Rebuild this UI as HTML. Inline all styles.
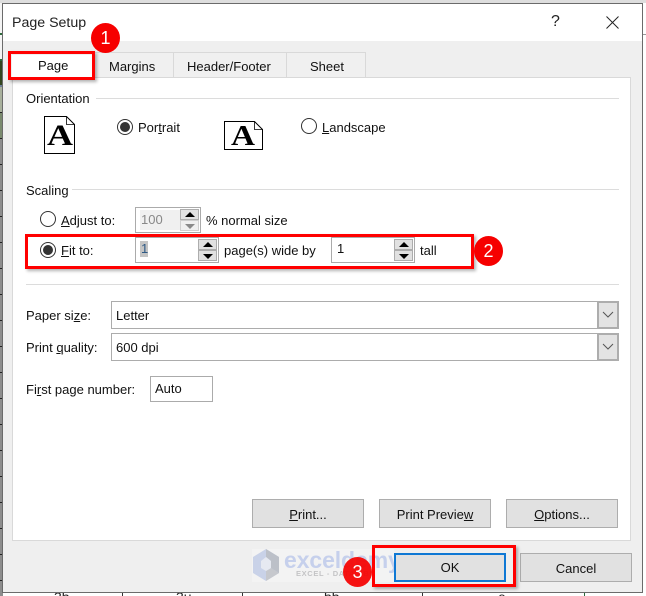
<!DOCTYPE html>
<html><head><meta charset="utf-8">
<style>
html{margin:0;padding:0;width:646px;height:596px;overflow:hidden}
body{margin:0;padding:0;width:646px;height:596px;position:relative;overflow:hidden;background:#fff;font-family:"Liberation Sans",sans-serif;font-size:13px;color:#111}
.a{position:absolute}
.t{position:absolute;white-space:nowrap;line-height:16px}
.box{position:absolute;box-sizing:border-box;border:1px solid #ababab;background:#fff}
.line{position:absolute;height:1px;background:#dcdcdc}
.btn{position:absolute;box-sizing:border-box;border:1px solid #adadad;background:#e1e1e1;text-align:center;line-height:29px;height:29px}
.red{position:absolute;box-sizing:border-box;border:3px solid #f00;box-shadow:2px 2px 3px rgba(0,0,0,.3)}
.num{position:absolute;width:29px;height:30px;border-radius:50%;background:#f60000;color:#fff;text-align:center;line-height:30px;font-size:18px}
.sp{position:absolute;box-sizing:border-box;width:19px;height:11px;border:1px solid #adadad;background:#e1e1e1}
.up:after,.dn:after{content:"";position:absolute;left:4px;border-left:5px solid transparent;border-right:5px solid transparent}
.up:after{top:2px;border-bottom:5px solid #000}
.dn:after{top:3px;border-top:5px solid #000}
.dis{background:#f0f0f0;border-color:#d0d0d0}
.dis:after{border-top-color:#8a8a8a}
.radio{position:absolute;box-sizing:border-box;width:16px;height:16px;border-radius:50%;border:1px solid #333;background:#fff}
.radio.on:after{content:"";position:absolute;left:2px;top:2px;width:10px;height:10px;border-radius:50%;background:#333}
.arr{position:absolute;box-sizing:border-box;left:597px;width:22px;height:28px;border:2px solid #adadad;background:#e3e3e3}
u{text-decoration-thickness:1px;text-underline-offset:1px}
.tick{position:absolute;left:0;width:3px;height:1px;background:#222}
.sheet{position:absolute;white-space:nowrap;font-size:14px;line-height:16px;color:#222;top:-4px}
</style></head>
<body>
<div class="a" style="left:0;top:0;width:646px;height:3px;background:#dedede"></div>
<div class="a" style="left:0;top:86px;width:3px;height:510px;background:#8d8d8d"></div>
<div class="a" style="left:0;top:3px;width:3px;height:57px;background:#f4f4f4"></div>
<div class="a" style="left:0;top:33px;width:3px;height:2px;background:#2d6a3c"></div>
<div class="a" style="left:0;top:59px;width:3px;height:2px;background:#2d6a3c"></div>
<div class="a" style="left:0;top:61px;width:3px;height:24px;background:#33461f"></div>
<div class="a" style="left:0;top:85px;width:3px;height:2px;background:#6f7f9a"></div>
<div class="a" style="left:0;top:113px;width:3px;height:25px;background:#7a8a6e"></div>
<div class="a" style="left:0;top:87px;width:3px;height:26px;background:#a8b09c"></div>
<div class="tick" style="top:112px"></div><div class="tick" style="top:138px"></div><div class="tick" style="top:164px"></div><div class="tick" style="top:190px"></div><div class="tick" style="top:216px"></div><div class="tick" style="top:242px"></div><div class="tick" style="top:268px"></div><div class="tick" style="top:294px"></div><div class="tick" style="top:320px"></div><div class="tick" style="top:346px"></div><div class="tick" style="top:372px"></div><div class="tick" style="top:398px"></div><div class="tick" style="top:424px"></div><div class="tick" style="top:450px"></div><div class="tick" style="top:476px"></div><div class="tick" style="top:502px"></div><div class="tick" style="top:528px"></div><div class="tick" style="top:554px"></div><div class="tick" style="top:580px"></div>
<div class="a" style="left:642px;top:34px;width:4px;height:1px;background:#9a9a9a"></div>

<!-- dialog -->
<div class="a" style="left:2px;top:3px;width:641px;height:590px;box-sizing:border-box;border:1px solid #6b6b6b;background:#efefef"></div>
<div class="a" style="left:3px;top:4px;width:639px;height:37px;background:#fff"></div>
<div class="t" style="left:12px;top:14px;font-size:14.2px;line-height:18px;color:#222">Page Setup</div>
<div class="t" style="left:551px;top:13px;font-size:16px;line-height:18px;color:#222">?</div>
<svg class="a" style="left:605px;top:15px" width="16" height="16"><path d="M1.5 1.5L13.5 13.5M13.5 1.5L1.5 13.5" stroke="#222" stroke-width="1" fill="none"/></svg>

<!-- bottom strip of sheet, clipped to the 3px below the dialog -->
<div class="a" style="left:0;top:593px;width:646px;height:3px;overflow:hidden">
<div class="sheet" style="left:54px">3b</div>
<div class="sheet" style="left:176px">3u</div>
<div class="sheet" style="left:324px">bb</div>
<div class="sheet" style="left:498px">e-</div>
<div class="a" style="left:0;top:0;width:3px;height:3px;background:#8d8d8d"></div>
<div class="a" style="left:122px;top:0;width:1px;height:3px;background:#333"></div>
<div class="a" style="left:242px;top:0;width:1px;height:3px;background:#333"></div>
<div class="a" style="left:422px;top:0;width:1px;height:3px;background:#333"></div>
<div class="a" style="left:584px;top:0;width:1px;height:3px;background:#2d6a3c"></div>
</div>

<!-- panel -->
<div class="a" style="left:12px;top:77px;width:619px;height:464px;box-sizing:border-box;border:1px solid #d9d9d9;background:#fff"></div>

<!-- tabs -->
<div class="a" style="left:12px;top:55px;width:82px;height:24px;background:#fff"></div>
<div class="a" style="left:94px;top:52px;width:80px;height:25px;box-sizing:border-box;border:1px solid #d9d9d9;border-bottom:0;background:#f0f0f0"></div>
<div class="a" style="left:173px;top:52px;width:114px;height:25px;box-sizing:border-box;border:1px solid #d9d9d9;border-bottom:0;background:#f0f0f0"></div>
<div class="a" style="left:286px;top:52px;width:80px;height:25px;box-sizing:border-box;border:1px solid #d9d9d9;border-bottom:0;background:#f0f0f0"></div>
<div class="t" style="left:38px;top:58px">Page</div>
<div class="t" style="left:109px;top:59px">Margins</div>
<div class="t" style="left:187px;top:59px">Header/Footer</div>
<div class="t" style="left:310px;top:59px">Sheet</div>

<!-- orientation -->
<div class="t" style="left:26px;top:91px">Orientation</div>
<div class="line" style="left:96px;top:98px;width:523px"></div>
<svg class="a" style="left:43px;top:115px" width="34" height="41"><path d="M1.5 1.5H23.5L31.5 9.5V38.5H1.5Z" fill="#fff" stroke="#000"/><path d="M23.5 1.5V9.5H31.5" fill="none" stroke="#000" stroke-width=".8"/><text x="4" y="30" font-family="Liberation Serif" font-weight="bold" font-size="30" textLength="26" lengthAdjust="spacingAndGlyphs" fill="#000">A</text></svg>
<div class="radio on" style="left:117px;top:119px"></div>
<div class="t" style="left:138px;top:120px">Po<span>r</span><u>t</u>rait</div>
<svg class="a" style="left:223px;top:120px" width="41" height="31"><path d="M1.5 1.5H31.5L39.5 9.5V29.5H1.5Z" fill="#fff" stroke="#000"/><path d="M31.5 1.5V9.5H39.5" fill="none" stroke="#000" stroke-width=".8"/><text x="8" y="25" font-family="Liberation Serif" font-weight="bold" font-size="28" textLength="24" lengthAdjust="spacingAndGlyphs" fill="#000">A</text></svg>
<div class="radio" style="left:301px;top:118px"></div>
<div class="t" style="left:322px;top:120px"><u>L</u>andscape</div>

<!-- scaling -->
<div class="t" style="left:26px;top:183px">Scaling</div>
<div class="line" style="left:72px;top:189px;width:547px"></div>
<div class="radio" style="left:40px;top:211px"></div>
<div class="t" style="left:61px;top:213px"><u>A</u>djust to:</div>
<div class="box" style="left:135px;top:207px;width:66px;height:26px"></div>
<div class="a" style="left:140px;top:210px;width:40px;height:20px;background:#f0f0f0"></div>
<div class="t" style="left:141px;top:212px;color:#888">100</div>
<div class="sp up" style="left:180px;top:209px"></div>
<div class="sp dn dis" style="left:180px;top:220px"></div>
<div class="t" style="left:206px;top:213px">% normal size</div>

<div class="radio on" style="left:40px;top:242px"></div>
<div class="t" style="left:61px;top:243px"><u>F</u>it to:</div>
<div class="box" style="left:135px;top:237px;width:84px;height:26px"></div>
<div class="a" style="left:140px;top:241px;width:8px;height:16px;background:#c4c4c4"></div>
<div class="t" style="left:141px;top:241px;color:#2f5a85">1</div>
<div class="sp up" style="left:198px;top:239px"></div>
<div class="sp dn" style="left:198px;top:250px"></div>
<div class="t" style="left:224px;top:243px">page(s) wide by</div>
<div class="box" style="left:331px;top:237px;width:84px;height:26px"></div>
<div class="t" style="left:337px;top:241px">1</div>
<div class="sp up" style="left:394px;top:239px"></div>
<div class="sp dn" style="left:394px;top:250px"></div>
<div class="t" style="left:420px;top:243px">tall</div>
<div class="line" style="left:26px;top:284px;width:593px"></div>

<!-- selects -->
<div class="t" style="left:26px;top:308px">Paper si<u>z</u>e:</div>
<div class="box" style="left:111px;top:301px;width:508px;height:28px;border-color:#acacac"></div>
<div class="t" style="left:116px;top:308px">Letter</div>
<div class="arr" style="top:301px"></div>
<svg class="a" style="left:601px;top:310px" width="14" height="10"><path d="M2 2L7 7L12 2" fill="none" stroke="#555" stroke-width="1"/></svg>
<div class="t" style="left:26px;top:340px">Print <u>q</u>uality:</div>
<div class="box" style="left:111px;top:333px;width:508px;height:28px;border-color:#acacac"></div>
<div class="t" style="left:116px;top:340px">600 dpi</div>
<div class="arr" style="top:333px"></div>
<svg class="a" style="left:601px;top:342px" width="14" height="10"><path d="M2 2L7 7L12 2" fill="none" stroke="#555" stroke-width="1"/></svg>
<div class="t" style="left:26px;top:382px">Fi<u>r</u>st page number:</div>
<div class="box" style="left:150px;top:376px;width:63px;height:26px"></div>
<div class="t" style="left:155px;top:381px">Auto</div>

<!-- buttons -->
<div class="btn" style="left:252px;top:499px;width:112px"><u>P</u>rint...</div>
<div class="btn" style="left:379px;top:499px;width:112px">Print Previe<u>w</u></div>
<div class="btn" style="left:506px;top:499px;width:112px"><u>O</u>ptions...</div>

<!-- watermark -->
<div class="a" style="left:252px;top:549px;width:142px;height:33px;background:#f3f3f3"></div>
<svg class="a" style="left:251px;top:548px" width="30" height="34"><path d="M15 1L28 9V25L15 33L2 25V9Z" fill="#c9d2e8"/><path d="M15 1L28 9V25L20 20V13L15 9Z" fill="#bcc0c8"/><path d="M15 33L28 25L20 20L15 23Z" fill="#c6c8cd"/><path d="M10 13L15 9L20 13V20L15 23L10 20Z" fill="#e6e9f1"/></svg>
<div class="t" style="left:284px;top:548px;font-size:23px;line-height:24px;font-weight:bold;color:#c6d0ec;letter-spacing:-.1px">exceldemy</div>
<div class="t" style="left:296px;top:569px;font-size:7.5px;line-height:10px;font-weight:bold;color:#c4c4c6;letter-spacing:.65px">EXCEL - DATA - BI</div>

<div class="btn" style="left:394px;top:553px;width:112px;height:29px;border:2px solid #0f78d4;line-height:26px">OK</div>
<div class="btn" style="left:520px;top:553px;width:112px">Cancel</div>

<!-- annotations -->
<div class="red" style="left:8px;top:51px;width:87px;height:29px"></div>
<div class="red" style="left:25px;top:234px;width:449px;height:35px"></div>
<div class="red" style="left:372px;top:545px;width:144px;height:42px"></div>
<div class="num" style="left:91px;top:23px">1</div>
<div class="num" style="left:474px;top:236px">2</div>
<div class="num" style="left:343px;top:557px;opacity:.92">3</div>
</body></html>
